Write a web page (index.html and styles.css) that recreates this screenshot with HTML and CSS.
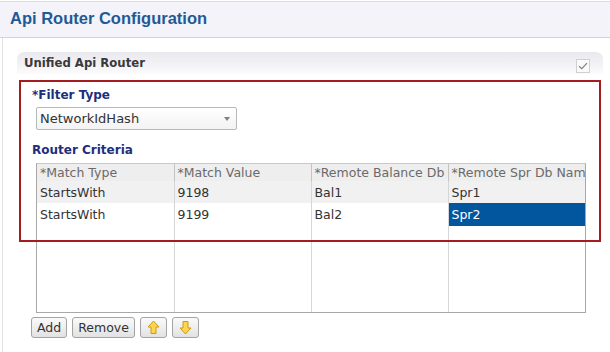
FILE: index.html
```html
<!DOCTYPE html>
<html lang="en">
<head>
    <meta charset="UTF-8">
    <title>Api Router Configuration</title>
    <link rel="stylesheet" href="styles.css">
</head>
<body>
    <div class="page-header">
        <h1>Api Router Configuration</h1>
    </div>

    <div class="page-body">
        <div class="panel">
            <div class="panel-title">
                <span>Unified Api Router</span>
                <span class="collapse-box">
                    <svg width="10" height="8" viewBox="0 0 10 8"><path d="M1 4.2 L3.8 6.6 L9 1.2" fill="none" stroke="#808080" stroke-width="1.2"/></svg>
                </span>
            </div>

            <div class="panel-body">
                <!-- annotation frame drawn over the fields -->
                <div class="highlight"></div>

                <div class="field-label">*Filter Type</div>
                <div class="select">
                    <span>NetworkIdHash</span>
                    <span class="select-arrow"></span>
                </div>

                <div class="field-label criteria-label">Router Criteria</div>
                <div class="grid">
                    <table>
                        <tr class="head">
                            <th>*Match Type</th>
                            <th>*Match Value</th>
                            <th>*Remote Balance Db</th>
                            <th>*Remote Spr Db Nam</th>
                        </tr>
                        <tr class="odd">
                            <td>StartsWith</td>
                            <td>9198</td>
                            <td>Bal1</td>
                            <td>Spr1</td>
                        </tr>
                        <tr class="even">
                            <td>StartsWith</td>
                            <td>9199</td>
                            <td>Bal2</td>
                            <td class="selected">Spr2</td>
                        </tr>
                        <tr class="filler">
                            <td></td><td></td><td></td><td></td>
                        </tr>
                    </table>
                </div>

                <div class="buttons">
                    <button>Add</button>
                    <button>Remove</button>
                    <button class="arrow">
                        <svg width="13" height="15" viewBox="0 0 13 15"><path d="M6.5 1 L12 7 L9 7 L9 13.5 L4 13.5 L4 7 L1 7 Z" fill="#ffd64a" stroke="#c99a1c" stroke-width="1" stroke-linejoin="round"/></svg>
                    </button>
                    <button class="arrow">
                        <svg width="13" height="15" viewBox="0 0 13 15"><path d="M6.5 14 L12 8 L9 8 L9 1.5 L4 1.5 L4 8 L1 8 Z" fill="#ffd64a" stroke="#c99a1c" stroke-width="1" stroke-linejoin="round"/></svg>
                    </button>
                </div>
            </div>
        </div>
    </div>
</body>
</html>
```

FILE: styles.css
```css
body {
    margin: 0;
    font-family: "DejaVu Sans", Verdana, sans-serif;
    background: #fff;
    color: #333;
}
.page-header {
    margin-top: 1px;
    height: 35px;
    background: #f3f3f9;
    border-top: 1px solid #dcdce0;
    border-bottom: 1px solid #d4d4d8;
}
h1 {
    margin: 0;
    padding: 7px 0 0 10px;
    font-family: "Liberation Sans", Arial, sans-serif;
    font-size: 16.5px;
    font-weight: bold;
    color: #1f5a96;
}
.page-body {
    margin-left: 2px;
    border-left: 1px solid #e2e2e2;
    height: 314px;
    padding: 14px 7px 0 14px;
}
.panel-title {
    display: flex;
    justify-content: space-between;
    align-items: center;
    height: 22px;
    padding: 0 13px 0 7px;
    border-radius: 7px 7px 0 0;
    background: linear-gradient(#e8e8ee, #fbfbfc);
    font-size: 11.7px;
    font-weight: bold;
    color: #3a3a3a;
}
.collapse-box {
    display: flex;
    align-items: center;
    justify-content: center;
    width: 12px;
    height: 12px;
    margin-top: 5px;
    border: 1px solid #d0d0d0;
    background: #fafafa;
}
.panel-body {
    position: relative;
    padding: 13px 0 0 15px;
}
.highlight {
    position: absolute;
    left: 2px;
    right: 2px;
    top: 6px;
    height: 158px;
    border: 2px solid #a41c20;
    z-index: 2;
    pointer-events: none;
}
.field-label {
    font-size: 12px;
    font-weight: bold;
    line-height: 16px;
    color: #1d2f7c;
}
.select {
    display: flex;
    justify-content: space-between;
    align-items: center;
    width: 201px;
    height: 23px;
    margin: 4px 0 0 4px;
    border: 1px solid #b8b8b8;
    border-radius: 2px;
    background: linear-gradient(#ffffff, #f3f3f3);
    font-size: 13px;
    color: #333;
    padding-left: 3px;
    box-sizing: border-box;
}
.select-arrow {
    width: 0;
    height: 0;
    margin-right: 6px;
    border-left: 3.5px solid transparent;
    border-right: 3.5px solid transparent;
    border-top: 4px solid #808080;
}
.criteria-label {
    margin-top: 12px;
}
.grid {
    margin: 5px 0 0 4px;
    width: 550px;
    height: 150px;
    border: 1px solid #a8a8a8;
    border-top-color: #c8c8c8;
    box-sizing: border-box;
    background: #fff;
}
table {
    width: 100%;
    height: 148px;
    border-collapse: collapse;
    table-layout: fixed;
    font-size: 12.5px;
}
th, td {
    text-align: left;
    font-weight: normal;
    padding: 0 3px;
    border-left: 1px solid #d6d6d6;
    white-space: nowrap;
    overflow: hidden;
}
th:first-child, td:first-child {
    border-left: none;
}
.head th {
    height: 17px;
    background: #eeeeee;
    color: #6a6a6a;
    border-left-color: #c4c4c4;
}
.odd td {
    height: 22px;
    background: #f1f1f1;
}
.even td {
    height: 23px;
}
td.selected {
    background: #01569e;
    color: #fff;
}
.buttons {
    display: flex;
    gap: 5px;
    margin: 4px 0 0 -1px;
}
button {
    height: 21px;
    padding: 0 5px;
    border: 1px solid #a4a4a4;
    border-radius: 3px;
    background: linear-gradient(#fafafa, #e2e2e2);
    font-family: "DejaVu Sans", Verdana, sans-serif;
    font-size: 12.5px;
    color: #333;
}
button.arrow {
    width: 27px;
    display: flex;
    align-items: center;
    justify-content: center;
    padding: 0;
}
```
